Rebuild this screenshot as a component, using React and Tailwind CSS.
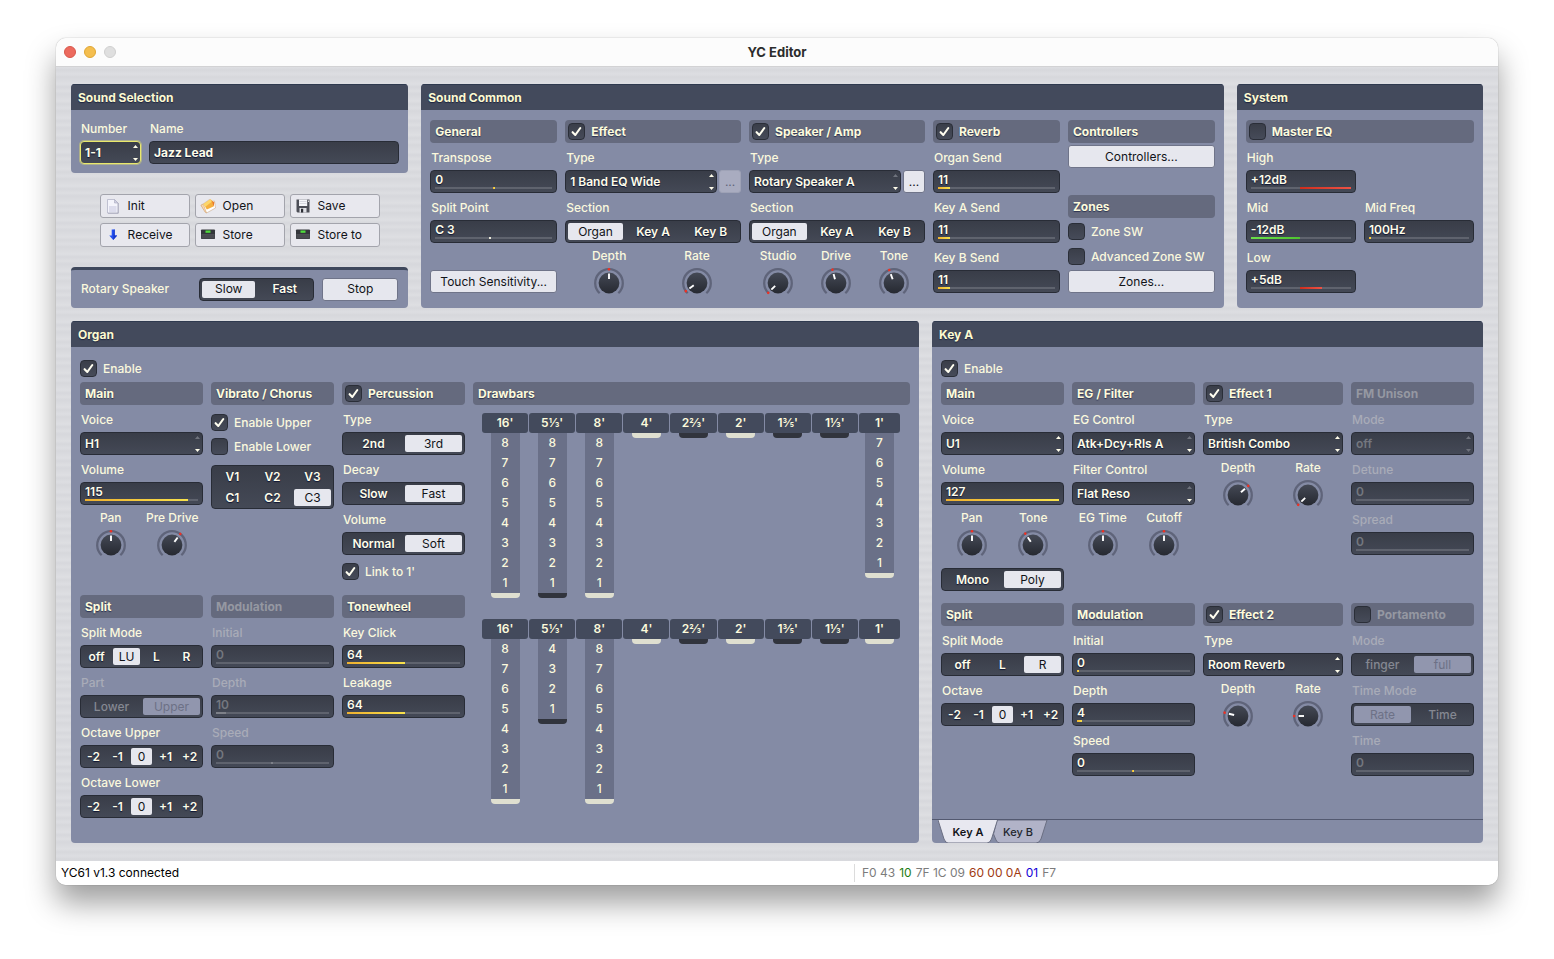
import React, { useId, useState } from "react";

const Panel = ({ title, className = "", children }) => (
  <section className={`flex flex-col overflow-hidden rounded bg-[#848ba5] ${className}`}>
    <h2 className="h-[26px] shrink-0 border-t border-[#2f3a4f] bg-[#434a5c] pl-[7px] text-[12px] leading-[25px] font-bold text-[#fdfad0] [text-shadow:0_1px_1px_#1d2440]">
      {title}
    </h2>
    {children}
  </section>
);

const Check = ({ label, checked = false, bold = false, disabled = false, className = "" }) => {
  const [on, setOn] = useState(checked);
  return (
    <label className={`flex items-center gap-1.5 ${className}`}>
      <span className="relative size-[17px] shrink-0">
        <input
          type="checkbox"
          checked={on}
          disabled={disabled}
          onChange={(e) => setOn(e.target.checked)}
          className="block size-[17px] appearance-none rounded border border-[#2a2e38] bg-linear-to-b from-[#3a3e49] to-[#464b59]"
        />
        {on && (
          <svg viewBox="0 0 17 17" className="pointer-events-none absolute inset-0 size-[17px]">
            <path d="M4.6 9.2 7.3 12 12.3 5" fill="none" stroke="#fffef0" strokeWidth="2.1" strokeLinecap="round" strokeLinejoin="round" />
          </svg>
        )}
      </span>
      <span
        className={`text-[12px] leading-[17px] whitespace-nowrap ${
          disabled
            ? "font-bold text-[#9598a2]"
            : bold
            ? "font-bold text-[#fdfbdc] [text-shadow:0_1px_1px_#2a3150]"
            : "font-medium text-[#fbf9dd]"
        }`}
      >
        {label}
      </span>
    </label>
  );
};

// Grey title strip above a column, optionally with an on/off tick box
const Heading = ({ title, check, checked, disabled = false }) => (
  <div className={`flex h-[23px] items-center rounded bg-[#656a7e] ${check ? "pl-[3px]" : "pl-[5px]"}`}>
    {check ? (
      <Check label={title} checked={checked} disabled={disabled} bold />
    ) : (
      <h3
        className={`text-[12px] leading-[23px] font-bold whitespace-nowrap ${
          disabled ? "text-[#9598a2]" : "text-[#fdfbdc] [text-shadow:0_1px_1px_#2a3150]"
        }`}
      >
        {title}
      </h3>
    )}
  </div>
);

const FieldLabel = ({ htmlFor, disabled, children }) => (
  <label
    htmlFor={htmlFor}
    className={`flex h-[27px] items-center pt-0.5 pl-px text-[12px] font-medium whitespace-nowrap ${
      disabled ? "text-[#a9acb8]" : "text-[#fbf9dd]"
    }`}
  >
    {children}
  </label>
);

const Arrows = ({ up, down }) => (
  <svg viewBox="0 0 5 17" className="pointer-events-none absolute top-[3px] right-[3px] h-[17px] w-[5px]">
    <path d="M0 4 2.5 1 5 4Z" fill={up} />
    <path d="M0 14 2.5 17 5 14Z" fill={down} />
  </svg>
);

const SelectBox = ({ id, value, label, first = false, focused = false, disabled = false, options }) => (
  <div className="relative min-w-0 flex-1">
    <select
      id={id}
      aria-label={label}
      defaultValue={value}
      disabled={disabled}
      className={`block h-[23px] w-full appearance-none rounded border bg-linear-to-b from-[#393d48] to-[#444956] pr-3 pl-1 text-[12px] leading-5 outline-none ${
        focused ? "border-[#e9e86c] font-bold ring-1 ring-[#c9ca78]/60" : "border-[#282c36] font-semibold"
      } ${disabled ? "text-[#74777f] opacity-100" : "text-[#fffdea] [text-shadow:0_1px_1px_#0d1433]"}`}
    >
      {(options || [value]).map((option) => (
        <option key={option}>{option}</option>
      ))}
    </select>
    <Arrows up={first || disabled ? "#6f737d" : "#fffdea"} down={disabled ? "#6f737d" : "#fffdea"} />
  </div>
);

const SelectField = ({ label, disabled, ...props }) => {
  const id = useId();
  return (
    <div>
      <FieldLabel htmlFor={id} disabled={disabled}>{label}</FieldLabel>
      <SelectBox id={id} disabled={disabled} {...props} />
    </div>
  );
};

const barColors = {
  yellow: "bg-linear-to-r from-[#eeb02f] to-[#f8e24c]",
  red: "bg-linear-to-r from-[#cf2d1c] to-[#ee5245]",
  green: "bg-linear-to-r from-[#6be04a] to-[#4fc42f]",
  white: "bg-[#eceadb]",
  grey: "bg-[#7d8088]",
};

// Value box with a thin level bar; from/to are percentages of the track
const SliderField = ({ label, value, from = 0, to = 0, dot = false, color = "yellow", disabled = false }) => {
  const id = useId();
  return (
    <div>
      <FieldLabel htmlFor={id} disabled={disabled}>{label}</FieldLabel>
      <div className="relative h-[23px] rounded border border-[#282c36] bg-linear-to-b from-[#393d48] to-[#444956] px-1">
        <output
          htmlFor={id}
          className={`block h-4 text-[12px] leading-[17px] font-semibold ${
            disabled ? "text-[#74777f]" : "text-[#fffdea] [text-shadow:0_1px_1px_#0d1433]"
          }`}
        >
          {value}
        </output>
        <div className="h-0.5 bg-[#5f636e]">
          <div
            className={`h-0.5 ${barColors[disabled ? "grey" : color]}`}
            style={{ marginLeft: `${from}%`, width: dot ? 2 : `${to - from}%` }}
          />
        </div>
        <input id={id} type="range" defaultValue={to} disabled={disabled} className="absolute inset-0 size-full opacity-0" />
      </div>
    </div>
  );
};

const gridCols = {
  2: "grid-cols-2",
  3: "grid-cols-3",
  4: "grid-cols-4",
  5: "grid-cols-5",
};

const Segments = ({ name, items, value, cols = items.length, disabled = false, className = "" }) => {
  const [current, setCurrent] = useState(value);
  const group = useId();
  return (
    <div
      role="radiogroup"
      aria-label={name}
      className={`grid gap-x-[3px] gap-y-1 rounded border border-[#282c36] bg-linear-to-b from-[#393d48] to-[#444956] p-0.5 ${gridCols[cols]} ${className}`}
    >
      {items.map((item) => (
        <label
          key={item}
          className={`flex h-[17px] items-center justify-center rounded-xs text-[12px] ${
            item === current
              ? disabled
                ? "bg-[#9196ae] text-[#6d7186]"
                : "bg-[#e6e7ee] text-[#111318]"
              : disabled
              ? "font-medium text-[#858892]"
              : "font-semibold text-[#fffdea] [text-shadow:0_1px_1px_#0d1433]"
          }`}
        >
          <input
            type="radio"
            name={group}
            checked={item === current}
            disabled={disabled}
            onChange={() => setCurrent(item)}
            className="sr-only"
          />
          {item}
        </label>
      ))}
    </div>
  );
};

const SegmentField = ({ label, disabled, ...props }) => (
  <div>
    <FieldLabel disabled={disabled}>{label}</FieldLabel>
    <Segments name={label} disabled={disabled} {...props} />
  </div>
);

const Knob = ({ label, angle }) => {
  const id = useId();
  return (
    <div className="flex flex-1 flex-col items-center">
      <label htmlFor={id} className="h-6 pt-[3px] text-[12px] leading-5 font-medium whitespace-nowrap text-[#fbf9dd]">
        {label}
      </label>
      <div className="relative size-8">
        <svg viewBox="0 0 32 32" className="size-8">
          <defs>
            <linearGradient id={`${id}g`} x1="0" y1="0" x2="0" y2="1">
              <stop offset="0" stopColor="#444955" />
              <stop offset="1" stopColor="#262931" />
            </linearGradient>
          </defs>
          <path d="M6.700 26.200A13.800 13.800 0 1 1 25.300 26.200" fill="none" stroke="#5f647a" strokeWidth="2.300" />
          <circle cx="16" cy="16" r="10.400" fill={`url(#${id}g)`} />
          <g transform={`rotate(${angle} 16 16)`}>
            <path d="M16 6.600V12" stroke="#fff" strokeWidth="1.900" />
            <circle cx="16" cy="2.200" r="1.300" fill="#ee3124" />
          </g>
        </svg>
        <input id={id} type="range" min="-135" max="135" defaultValue={angle} className="absolute inset-0 size-full opacity-0" />
      </div>
    </div>
  );
};

const Button = ({ children, disabled = false, className = "" }) => (
  <button
    type="button"
    disabled={disabled}
    className={`flex h-[23px] items-center rounded-[3px] border text-[12px] whitespace-nowrap ${
      disabled ? "border-[#9ea2b6] bg-[#a9acc0] text-[#61657a]" : "border-[#6f7489] bg-[#e6e7ee] text-[#111318]"
    } ${className}`}
  >
    {children}
  </button>
);

const PageIcon = () => (
  <svg viewBox="0 0 16 16" className="size-4">
    <path d="M2.5 1.5h7l3.5 3.5v10h-10.500z" fill="#f4f4fb" stroke="#b4b5c8" strokeWidth=".8" />
    <path d="M4 8h7.500v6H4z" fill="#dcdcec" />
    <path d="M9.500 1.500V5H13z" fill="#d0d1e2" stroke="#a9aabf" strokeWidth=".6" />
    <path d="M13.300 5v10.300H3" fill="none" stroke="#9798ac" strokeWidth=".6" />
  </svg>
);

const FolderIcon = () => (
  <svg viewBox="0 0 16 16" className="size-4">
    <path d="M1 7.500 9.500 1.500 11 3.500 14.500 3 15.500 10 6.500 15z" fill="#fff" stroke="#c9a98c" strokeWidth=".6" />
    <path d="M1 7.200 3.200 6 6.500 14.800 5 14z" fill="#f6d9b8" stroke="#d09a5c" strokeWidth=".5" />
    <path d="M3.500 6 10.500 1.200 14.300 4.500 13.500 8.500 6.800 11.500z" fill="#f6b03e" />
    <path d="M3.500 6 10.500 1.200 11.500 4 5 9z" fill="#fcd66a" />
    <path d="M13.500 8.500 14.300 4.500 12 3z" fill="#e8762c" />
  </svg>
);

const DiskIcon = () => (
  <svg viewBox="0 0 16 16" className="size-4">
    <path d="M1.500 1.500h13v13h-12l-1-1z" fill="#4c4e57" />
    <path d="M4 1.500h8.200v6.500H4z" fill="#f4f5f9" />
    <path d="M4.500 3.500h7M4.500 5.500h7" stroke="#c8cad4" strokeWidth=".7" />
    <path d="M4.500 10h7v4.500h-7z" fill="#dfe0e6" />
    <path d="M6 10.800h2.200v3.700H6z" fill="#2b2d34" />
    <path d="M13 2.500h.8v1.500H13z" fill="#fff" />
  </svg>
);

const DownIcon = () => (
  <svg viewBox="0 0 16 16" className="size-4">
    <path d="M6.700 2.500h3v6h2.500L8.200 13 4.300 8.500h2.400z" fill="#2350f2" />
    <path d="M8.800 2.500h.9v6h2.500L8.200 13z" fill="#1738c8" />
  </svg>
);

const KeyboardIcon = () => (
  <svg viewBox="0 0 16 16" className="size-4">
    <rect x="1" y="2.500" width="14" height="9.500" rx=".8" fill="#34363b" />
    <path d="M1.500 7h13v4.500h-13z" fill="#505258" />
    <path d="M3 7.500v4M5 7.500v4M7 7.500v4M9 7.500v4M11 7.500v4M13 7.500v4" stroke="#3c3e44" strokeWidth=".6" />
    <rect x="5.500" y="3.500" width="5" height="2.300" fill="#4fdc3c" />
  </svg>
);

const toolButtons = [
  { text: "Init", icon: <PageIcon /> },
  { text: "Open", icon: <FolderIcon /> },
  { text: "Save", icon: <DiskIcon /> },
  { text: "Receive", icon: <DownIcon /> },
  { text: "Store", icon: <KeyboardIcon /> },
  { text: "Store to", icon: <KeyboardIcon /> },
];

const footages = ["16'", "5⅓'", "8'", "4'", "2⅔'", "2'", "1⅗'", "1⅓'", "1'"];
const darkBars = [1, 4, 6, 7];

const Drawbars = ({ name, values }) => (
  <div
    role="group"
    aria-label={name}
    className="grid h-[186px] grid-cols-[repeat(8,46fr)_41fr] items-start gap-px pr-2.5 pl-[9px]"
  >
    {footages.map((footage, i) => (
      <div key={footage} className="relative flex flex-col items-center">
        <div className="h-5 w-full rounded-[3px] bg-[#434a5c] text-center text-[12px] leading-5 font-semibold text-[#fdfbdc]">
          {footage}
        </div>
        <div className="w-[29px] bg-[#6a7088] text-center text-[12px] font-medium text-[#fbf9dd]">
          {Array.from({ length: values[i] }, (_, n) => (
            <div key={n} className="h-5 leading-5">{values[i] - n}</div>
          ))}
        </div>
        <div className={`h-[5px] w-[29px] rounded-b ${darkBars.includes(i) ? "bg-[#31343d]" : "bg-[#dfdfd0]"}`} />
        <input
          type="range"
          min="0"
          max="8"
          defaultValue={values[i]}
          aria-label={`${name} ${footage}`}
          className="absolute inset-0 size-full opacity-0 [writing-mode:vertical-lr]"
        />
      </div>
    ))}
  </div>
);

const SoundSelection = () => (
  <Panel title="Sound Selection">
    <div className="grid grid-cols-[61fr_250fr] gap-2 px-[9px] pt-1 pb-[9px]">
      <SelectField label="Number" value="1-1" focused />
      <div>
        <FieldLabel htmlFor="sound-name">Name</FieldLabel>
        <input
          id="sound-name"
          type="text"
          defaultValue="Jazz Lead"
          className="block h-[23px] w-full rounded border border-[#282c36] bg-linear-to-b from-[#393d48] to-[#444956] px-1 text-[12px] font-bold text-[#fffdea] [text-shadow:0_1px_1px_#0d1433] outline-none"
        />
      </div>
    </div>
  </Panel>
);

const RotarySpeaker = () => (
  <section className="flex h-[41px] items-center rounded border-t-[3px] border-[#3f485c] bg-[#848ba5] pr-2.5 pl-2.5">
    <h2 className="flex-1 text-[12px] font-medium text-[#fbf9dd]">Rotary Speaker</h2>
    <Segments name="Rotary Speaker" items={["Slow", "Fast"]} value="Slow" className="w-[115px]" />
    <Button className="ml-2 w-[76px] justify-center">Stop</Button>
  </section>
);

const SoundCommon = () => (
  <Panel title="Sound Common">
    <div className="grid grid-cols-[127fr_176fr_176fr_127fr_147fr] gap-2 px-[9px] pt-2.5">
      <div>
        <Heading title="General" />
        <SliderField label="Transpose" value="0" from={49} dot />
        <SliderField label="Split Point" value="C 3" from={46} dot color="white" />
        <Button className="mt-[27px] w-full justify-center">Touch Sensitivity...</Button>
      </div>
      <div>
        <Heading title="Effect" check checked />
        <FieldLabel htmlFor="effect-type">Type</FieldLabel>
        <div className="flex gap-0.5">
          <SelectBox id="effect-type" value="1 Band EQ Wide" />
          <Button disabled className="w-[22px] justify-center">...</Button>
        </div>
        <SegmentField label="Section" items={["Organ", "Key A", "Key B"]} value="Organ" />
        <div className="flex">
          <Knob label="Depth" angle={0} />
          <Knob label="Rate" angle={-126} />
        </div>
      </div>
      <div>
        <Heading title="Speaker / Amp" check checked />
        <FieldLabel htmlFor="speaker-type">Type</FieldLabel>
        <div className="flex gap-0.5">
          <SelectBox id="speaker-type" value="Rotary Speaker A" first />
          <Button className="w-[22px] justify-center">...</Button>
        </div>
        <SegmentField label="Section" items={["Organ", "Key A", "Key B"]} value="Organ" />
        <div className="grid grid-cols-3 pr-0.5">
          <Knob label="Studio" angle={-135} />
          <Knob label="Drive" angle={-15} />
          <Knob label="Tone" angle={-20} />
        </div>
      </div>
      <div>
        <Heading title="Reverb" check checked />
        <SliderField label="Organ Send" value="11" to={10} />
        <SliderField label="Key A Send" value="11" to={10} />
        <SliderField label="Key B Send" value="11" to={10} />
      </div>
      <div>
        <Heading title="Controllers" />
        <Button className="mt-0.5 mb-[27px] w-full justify-center">Controllers...</Button>
        <Heading title="Zones" />
        <Check label="Zone SW" className="mt-[5px]" />
        <Check label="Advanced Zone SW" className="mt-2" />
        <Button className="mt-[5px] w-full justify-center">Zones...</Button>
      </div>
    </div>
  </Panel>
);

const System = () => (
  <Panel title="System">
    <div className="px-[9px] pt-2.5">
      <Heading title="Master EQ" check />
      <div className="grid grid-cols-2 gap-x-2">
        <SliderField label="High" value="+12dB" from={49} to={100} color="red" />
        <div />
        <SliderField label="Mid" value="-12dB" to={49} color="green" />
        <SliderField label="Mid Freq" value="100Hz" dot />
        <SliderField label="Low" value="+5dB" from={49} to={71} color="red" />
      </div>
    </div>
  </Panel>
);

const octaves = ["-2", "-1", "0", "+1", "+2"];

const Organ = () => (
  <Panel title="Organ">
    <div className="px-[9px] pt-[13px] pb-[25px]">
      <Check label="Enable" checked className="mb-[5px]" />
      <div className="grid grid-cols-[123fr_123fr_123fr_437fr] grid-rows-[auto_1fr] gap-x-2 gap-y-[15px]">
        <div>
          <Heading title="Main" />
          <SelectField label="Voice" value="H1" first />
          <SliderField label="Volume" value="115" to={91} />
          <div className="flex">
            <Knob label="Pan" angle={0} />
            <Knob label="Pre Drive" angle={37} />
          </div>
        </div>
        <div>
          <Heading title="Vibrato / Chorus" />
          <Check label="Enable Upper" checked className="mt-[9px]" />
          <Check label="Enable Lower" className="mt-[7px] mb-2.5" />
          <Segments name="Vibrato / Chorus" items={["V1", "V2", "V3", "C1", "C2", "C3"]} value="C3" cols={3} />
        </div>
        <div>
          <Heading title="Percussion" check checked />
          <SegmentField label="Type" items={["2nd", "3rd"]} value="3rd" />
          <SegmentField label="Decay" items={["Slow", "Fast"]} value="Fast" />
          <SegmentField label="Volume" items={["Normal", "Soft"]} value="Soft" />
          <Check label="Link to 1'" checked className="mt-2" />
        </div>
        <div className="row-span-2">
          <Heading title="Drawbars" />
          <div className="mt-2 flex flex-col gap-5">
            <Drawbars name="Upper" values={[8, 8, 8, 0, 0, 0, 0, 0, 7]} />
            <Drawbars name="Lower" values={[8, 4, 8, 0, 0, 0, 0, 0, 0]} />
          </div>
        </div>
        <div>
          <Heading title="Split" />
          <SegmentField label="Split Mode" items={["off", "LU", "L", "R"]} value="LU" />
          <SegmentField label="Part" items={["Lower", "Upper"]} value="Upper" disabled />
          <SegmentField label="Octave Upper" items={octaves} value="0" />
          <SegmentField label="Octave Lower" items={octaves} value="0" />
        </div>
        <div>
          <Heading title="Modulation" disabled />
          <SliderField label="Initial" value="0" disabled />
          <SliderField label="Depth" value="10" to={9} disabled />
          <SliderField label="Speed" value="0" from={49} dot disabled />
        </div>
        <div>
          <Heading title="Tonewheel" />
          <SliderField label="Key Click" value="64" to={51} />
          <SliderField label="Leakage" value="64" to={51} />
        </div>
      </div>
    </div>
  </Panel>
);

const Tabs = () => (
  <div role="tablist" className="mt-auto flex h-6 border-t border-[#535970] pl-1.5">
    <button type="button" role="tab" aria-selected="true" className="relative z-10 h-[23px] w-[60px]">
      <svg viewBox="0 0 60 23" preserveAspectRatio="none" className="absolute inset-0 size-full">
        <path d="M0 0 6 19Q7.500 23 10 23H49Q52 23 53.500 19L59.500 0" fill="#e8e8f0" stroke="#6a6e82" strokeWidth="1" />
      </svg>
      <span className="relative block text-[11px] leading-[22px] font-semibold text-[#111318]">Key A</span>
    </button>
    <button type="button" role="tab" aria-selected="false" className="relative -ml-1.5 h-[23px] w-14">
      <svg viewBox="0 0 56 23" preserveAspectRatio="none" className="absolute inset-0 size-full">
        <path d="M5 0 1.500 14 4 20Q5 23 8 23H44Q47.500 23 49 19L55 0Z" fill="#b1b3c8" stroke="#6a6e82" strokeWidth="1" />
      </svg>
      <span className="relative block pr-1 text-[11px] leading-6 font-medium text-[#23262e]">Key B</span>
    </button>
  </div>
);

const KeyPart = () => (
  <Panel title="Key A">
    <div className="px-[9px] pt-[13px]">
      <Check label="Enable" checked className="mb-[5px]" />
      <div className="grid grid-cols-[123fr_123fr_140fr_123fr] gap-x-2 gap-y-3">
        <div>
          <Heading title="Main" />
          <SelectField label="Voice" value="U1" />
          <SliderField label="Volume" value="127" to={100} />
          <div className="flex">
            <Knob label="Pan" angle={0} />
            <Knob label="Tone" angle={-34} />
          </div>
          <Segments name="Mono / Poly" items={["Mono", "Poly"]} value="Poly" className="mt-[7px]" />
        </div>
        <div>
          <Heading title="EG / Filter" />
          <SelectField label="EG Control" value="Atk+Dcy+Rls A" first />
          <SelectField label="Filter Control" value="Flat Reso" first />
          <div className="flex">
            <Knob label="EG Time" angle={0} />
            <Knob label="Cutoff" angle={0} />
          </div>
        </div>
        <div>
          <Heading title="Effect 1" check checked />
          <SelectField label="Type" value="British Combo" />
          <div className="flex">
            <Knob label="Depth" angle={48} />
            <Knob label="Rate" angle={-135} />
          </div>
        </div>
        <div>
          <Heading title="FM Unison" disabled />
          <SelectField label="Mode" value="off" disabled />
          <SliderField label="Detune" value="0" disabled />
          <SliderField label="Spread" value="0" disabled />
        </div>
        <div>
          <Heading title="Split" />
          <SegmentField label="Split Mode" items={["off", "L", "R"]} value="R" />
          <SegmentField label="Octave" items={octaves} value="0" />
        </div>
        <div>
          <Heading title="Modulation" />
          <SliderField label="Initial" value="0" dot />
          <SliderField label="Depth" value="4" to={4} />
          <SliderField label="Speed" value="0" from={49} dot />
        </div>
        <div>
          <Heading title="Effect 2" check checked />
          <SelectField label="Type" value="Room Reverb" />
          <div className="flex">
            <Knob label="Depth" angle={-76} />
            <Knob label="Rate" angle={-90} />
          </div>
        </div>
        <div>
          <Heading title="Portamento" check disabled />
          <SegmentField label="Mode" items={["finger", "full"]} value="full" disabled />
          <SegmentField label="Time Mode" items={["Rate", "Time"]} value="Rate" disabled />
          <SliderField label="Time" value="0" disabled />
        </div>
      </div>
    </div>
    <Tabs />
  </Panel>
);

const TitleBar = () => (
  <header className="grid h-[29px] grid-cols-[1fr_auto_1fr] items-center border-b border-[#d2d2d4] bg-[#fcfcfc] px-2">
    <div className="flex gap-2">
      <button type="button" aria-label="Close" className="size-3 rounded-full border border-[#d8574b] bg-[#ec6a5e]" />
      <button type="button" aria-label="Minimize" className="size-3 rounded-full border border-[#dfa633] bg-[#f4be4f]" />
      <button type="button" aria-label="Zoom" disabled className="size-3 rounded-full border border-[#cfcfcf] bg-[#dfdfdf]" />
    </div>
    <h1 className="text-[13px] leading-5 font-bold text-[#2c2c2c]">YC Editor</h1>
  </header>
);

const StatusBar = () => (
  <footer className="grid h-6 grid-cols-[798fr_644fr] items-center bg-white text-[12px] text-black">
    <div className="pl-[5px]">YC61 v1.3 connected</div>
    <div className="flex gap-1 border-l border-[#dcdcdc] pl-[7px] text-[#7c7c7c]">
      <span>F0 43</span>
      <span className="text-[#1d7d12]">10</span>
      <span>7F 1C 09</span>
      <span className="text-[#a03a10]">60 00 0A</span>
      <span className="text-[#1200d8]">01</span>
      <span>F7</span>
    </div>
  </footer>
);

const App = () => (
  <div className="min-h-screen bg-white px-14 pt-[38px] pb-[74px] font-[Inter,'Liberation_Sans',sans-serif]">
    <div className="overflow-hidden rounded-[10px] shadow-[0_0_1px_rgba(0,0,0,0.5),0_18px_30px_rgba(0,0,0,0.38)]">
      <TitleBar />
      <main className="bg-[#dadbdf] bg-[repeating-linear-gradient(180deg,rgba(255,255,255,0.1)_0px,rgba(160,160,170,0.06)_3px,rgba(255,255,255,0.08)_7px,rgba(150,150,160,0.05)_10px,rgba(255,255,255,0.1)_17px)] px-[15px] pt-[17px] pb-[18px]">
        <div className="grid grid-cols-[337fr_802fr_246fr] gap-[13px]">
          <div className="flex h-56 flex-col justify-between">
            <SoundSelection />
            <div className="grid grid-cols-[90px_90px_90px] justify-center gap-[5px]">
              {toolButtons.map((tool) => (
                <button
                  key={tool.text}
                  type="button"
                  className="flex h-6 items-center gap-[7px] rounded-[3px] border border-[#a3a4ac] bg-[#e8e8ee] pl-1 text-[12px] whitespace-nowrap text-[#111318]"
                >
                  {tool.icon}
                  {tool.text}
                </button>
              ))}
            </div>
            <RotarySpeaker />
          </div>
          <SoundCommon />
          <System />
        </div>
        <div className="mt-[13px] grid grid-cols-[848fr_551fr] gap-[13px]">
          <Organ />
          <KeyPart />
        </div>
      </main>
      <StatusBar />
    </div>
  </div>
);

export default App;
